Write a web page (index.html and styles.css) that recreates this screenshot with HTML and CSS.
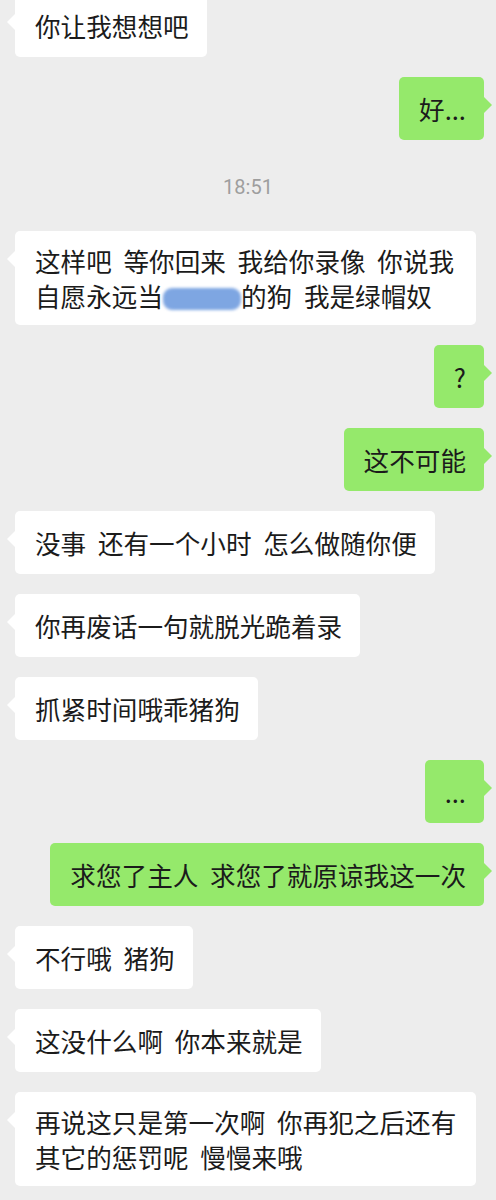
FILE: index.html
```html
<!DOCTYPE html>
<html lang="zh-CN">
<head>
  <meta charset="UTF-8">
  <meta name="viewport" content="width=device-width, initial-scale=1.0">
  <title>聊天</title>
  <link rel="stylesheet" href="styles.css">
</head>
<body>
  <div class="chat">
    <div class="row left"><div class="bubble"><p>你让我想想吧</p></div></div>
    <div class="row right"><div class="bubble"><p>好...</p></div></div>

    <div class="time">18:51</div>

    <div class="row left">
      <div class="bubble"><p>这样吧 等你回来 我给你录像 你说我自愿永远当<span class="masked"></span>的狗 我是绿帽奴</p></div>
    </div>
    <div class="row right"><div class="bubble"><p>?</p></div></div>
    <div class="row right"><div class="bubble"><p>这不可能</p></div></div>
    <div class="row left"><div class="bubble"><p>没事 还有一个小时 怎么做随你便</p></div></div>
    <div class="row left"><div class="bubble"><p>你再废话一句就脱光跪着录</p></div></div>
    <div class="row left"><div class="bubble"><p>抓紧时间哦乖猪狗</p></div></div>
    <div class="row right"><div class="bubble"><p>...</p></div></div>
    <div class="row right"><div class="bubble"><p>求您了主人 求您了就原谅我这一次</p></div></div>
    <div class="row left"><div class="bubble"><p>不行哦 猪狗</p></div></div>
    <div class="row left"><div class="bubble"><p>这没什么啊 你本来就是</p></div></div>
    <div class="row left"><div class="bubble"><p>再说这只是第一次啊 你再犯之后还有其它的惩罚呢 慢慢来哦</p></div></div>
  </div>
</body>
</html>
```

FILE: styles.css
```css
body {
  margin: 0;
  background-color: #ededed;
  font-family: "Noto Sans CJK SC", "Noto Sans", sans-serif;
  color: #1b1b1b;
}

.chat {
  margin-top: -6px;
}

.row {
  display: flex;
  padding: 0 12px 0 15px;
  margin-bottom: 20px;
}

.row.right {
  justify-content: flex-end;
}

.bubble {
  position: relative;
  display: flex;
  align-items: center;
  box-sizing: border-box;
  min-height: 63px;
  max-width: 461px;
  padding: 12px 18px 12px 20px;
  background-color: #fff;
  border-radius: 5px;
  font-size: 25.6px;
  line-height: 35px;
  word-spacing: 6px;
}

.bubble p {
  margin: 0;
}

.right .bubble {
  background-color: #95e96b;
}

/* little tails pointing at the (cropped) avatars */
.left .bubble::before,
.right .bubble::before {
  content: "";
  position: absolute;
  top: 20px;
  border: 8px solid transparent;
}

.left .bubble::before {
  left: -8px;
  border-left: 0;
  border-right-color: #fff;
}

.right .bubble::before {
  right: -8px;
  border-right: 0;
  border-left-color: #95e96b;
}

.masked {
  display: inline-block;
  width: 78px;
  height: 22px;
  vertical-align: -3px;
  background-color: #7ea6e2;
  border-radius: 9px;
  filter: blur(1.5px);
}

.time {
  padding: 15px 0 12px;
  margin-bottom: 20px;
  text-align: center;
  font-family: Roboto, "Liberation Sans", sans-serif;
  font-size: 20px;
  line-height: 24px;
  color: #9e9e9e;
}
```
